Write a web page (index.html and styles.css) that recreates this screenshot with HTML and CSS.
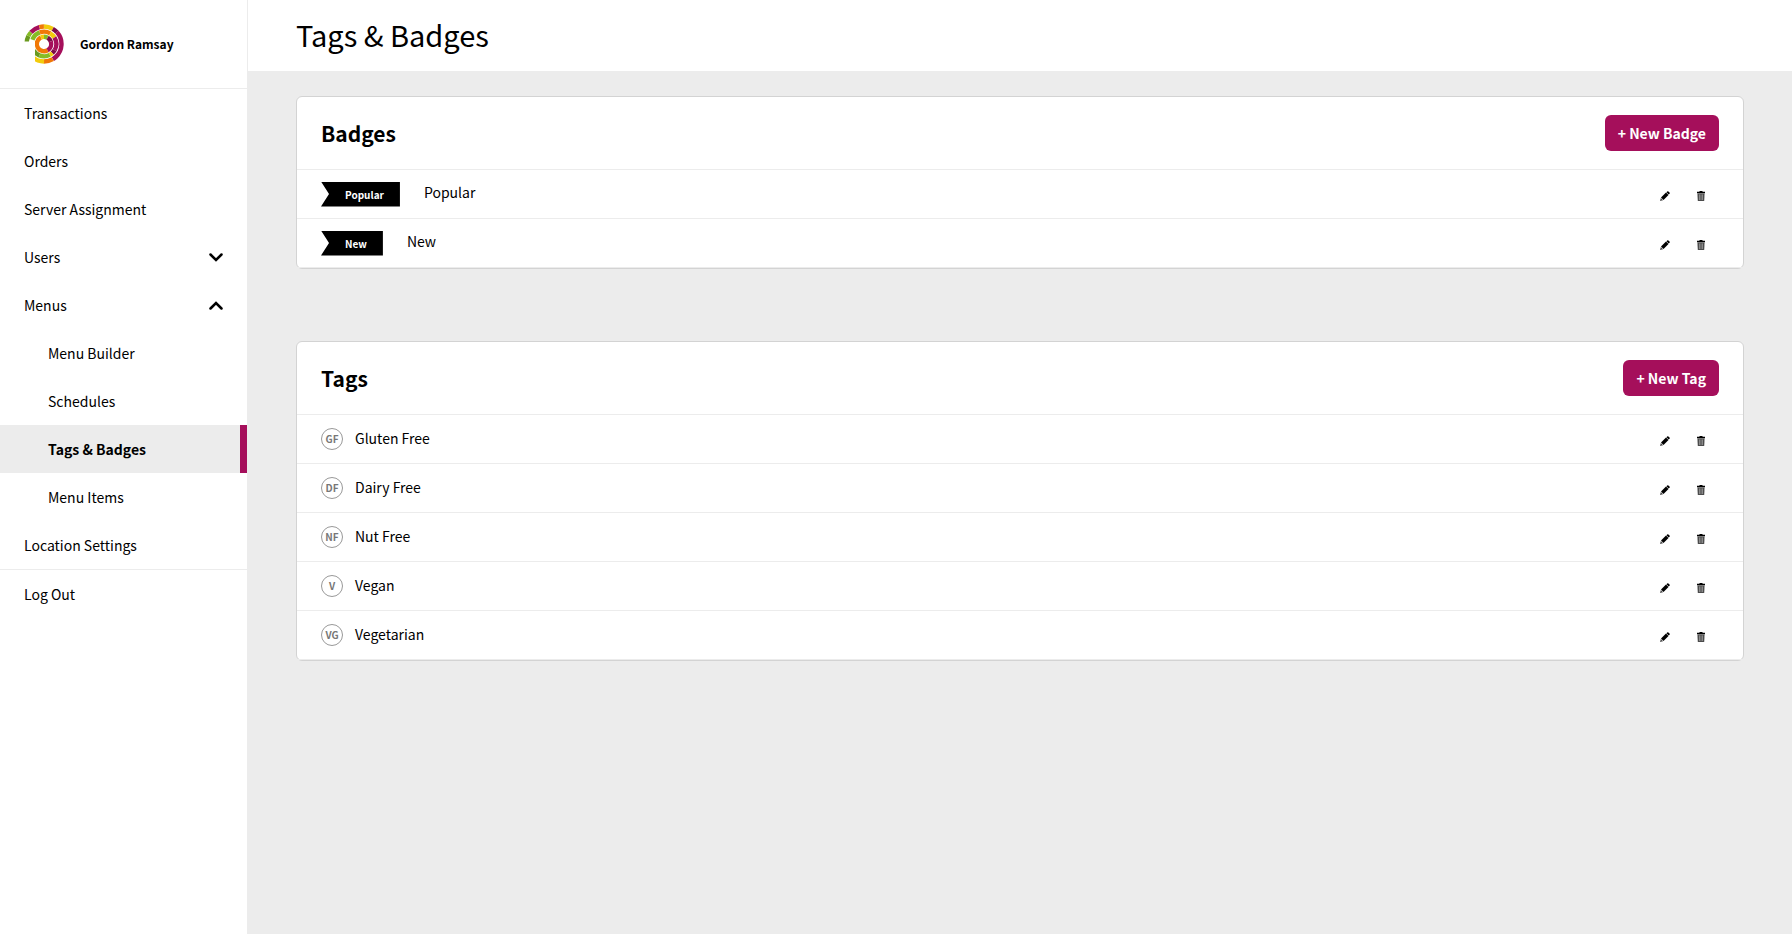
FILE: index.html
```html
<!DOCTYPE html>
<html lang="en">
<head>
    <meta charset="UTF-8">
    <meta name="viewport" content="width=device-width, initial-scale=1.0">
    <title>Tags &amp; Badges</title>
    <link rel="stylesheet" href="styles.css">
</head>
<body>
    <!-- Shared icons -->
    <svg class="sprite" aria-hidden="true">
        <symbol id="icon-pencil" viewBox="0 0 10 10">
            <path d="M7.2 0.5 Q7.8 -0.1 8.4 0.5 L9.5 1.6 Q10.1 2.2 9.5 2.8 L8.7 3.6 L6.4 1.3 Z"/>
            <path d="M6 1.5 L8.5 4 L3.5 9 L1 6.5 Z"/>
            <path d="M0.8 6.9 L3.1 9.2 L0 10 Z" opacity="0.7"/>
        </symbol>
        <symbol id="icon-trash" viewBox="0 0 8 10">
            <path d="M2.5 0 H5.5 V0.8 H8 V2.2 H0 V0.8 H2.5 Z"/>
            <path d="M0.4 2.6 H7.6 L7.2 10 H0.8 Z" opacity="0.7"/>
            <path d="M2.5 3.4 V9 M4 3.4 V9 M5.5 3.4 V9" stroke="#fff" stroke-width="0.5" opacity="0.7"/>
        </symbol>
        <symbol id="icon-chevron" viewBox="0 0 14 9">
            <path d="M1.5 1.5 L7 7 L12.5 1.5" fill="none" stroke="#000" stroke-width="2.5" stroke-linecap="round"/>
        </symbol>
    </svg>

    <div class="app">
        <aside class="sidebar">
            <div class="brand">
                <svg class="brand-logo" viewBox="0 0 40 40" fill="none" stroke-width="4.4" aria-hidden="true">
                    <clipPath id="logo-clip"><path d="M0 0 H40 V40 H11 V17.5 H0 Z"/></clipPath>
                    <g clip-path="url(#logo-clip)">
                        <!-- outer ring -->
                        <circle cx="20" cy="20" r="17.5" pathLength="360" stroke="#6a9a1f" stroke-dasharray="27 333" transform="rotate(180 20 20)"/>
                        <circle cx="20" cy="20" r="17.5" pathLength="360" stroke="#86bc25" stroke-dasharray="15 345" transform="rotate(207 20 20)"/>
                        <circle cx="20" cy="20" r="17.5" pathLength="360" stroke="#a50f5b" stroke-dasharray="33 327" transform="rotate(222 20 20)"/>
                        <circle cx="20" cy="20" r="17.5" pathLength="360" stroke="#f07807" stroke-dasharray="15 345" transform="rotate(255 20 20)"/>
                        <circle cx="20" cy="20" r="17.5" pathLength="360" stroke="#f2cb0c" stroke-dasharray="30 330" transform="rotate(270 20 20)"/>
                        <circle cx="20" cy="20" r="17.5" pathLength="360" stroke="#7d0c49" stroke-dasharray="18 342" transform="rotate(300 20 20)"/>
                        <circle cx="20" cy="20" r="17.5" pathLength="360" stroke="#a50f5b" stroke-dasharray="102 258" transform="rotate(318 20 20)"/>
                        <circle cx="20" cy="20" r="17.5" pathLength="360" stroke="#f07807" stroke-dasharray="30 330" transform="rotate(60 20 20)"/>
                        <circle cx="20" cy="20" r="17.5" pathLength="360" stroke="#f2cb0c" stroke-dasharray="40 320" transform="rotate(90 20 20)"/>
                        <!-- middle ring -->
                        <circle cx="20" cy="20" r="12.3" pathLength="360" stroke="#86bc25" stroke-dasharray="50 310" transform="rotate(200 20 20)"/>
                        <circle cx="20" cy="20" r="12.3" pathLength="360" stroke="#f07807" stroke-dasharray="50 310" transform="rotate(250 20 20)"/>
                        <circle cx="20" cy="20" r="12.3" pathLength="360" stroke="#f2cb0c" stroke-dasharray="28 332" transform="rotate(300 20 20)"/>
                        <circle cx="20" cy="20" r="12.3" pathLength="360" stroke="#a50f5b" stroke-dasharray="62 298" transform="rotate(328 20 20)"/>
                        <circle cx="20" cy="20" r="12.3" pathLength="360" stroke="#7d0c49" stroke-dasharray="18 342" transform="rotate(30 20 20)"/>
                        <circle cx="20" cy="20" r="12.3" pathLength="360" stroke="#f2cb0c" stroke-dasharray="14 346" transform="rotate(48 20 20)"/>
                        <circle cx="20" cy="20" r="12.3" pathLength="360" stroke="#86bc25" stroke-dasharray="50 310" transform="rotate(62 20 20)"/>
                        <circle cx="20" cy="20" r="12.3" pathLength="360" stroke="#6a9a1f" stroke-dasharray="36 324" transform="rotate(112 20 20)"/>
                        <!-- inner ring -->
                        <circle cx="20" cy="20" r="7.2" pathLength="360" stroke="#f07807" stroke-dasharray="185 175" transform="rotate(60 20 20)"/>
                        <circle cx="20" cy="20" r="7.2" pathLength="360" stroke="#f2cb0c" stroke-dasharray="25 335" transform="rotate(245 20 20)"/>
                        <circle cx="20" cy="20" r="7.2" pathLength="360" stroke="#86bc25" stroke-dasharray="30 330" transform="rotate(270 20 20)"/>
                        <circle cx="20" cy="20" r="7.2" pathLength="360" stroke="#7d0c49" stroke-dasharray="40 320" transform="rotate(300 20 20)"/>
                        <circle cx="20" cy="20" r="7.2" pathLength="360" stroke="#a50f5b" stroke-dasharray="80 280" transform="rotate(340 20 20)"/>
                    </g>
                </svg>
                <span class="brand-name">Gordon Ramsay</span>
            </div>

            <nav class="nav">
                <a class="nav-item" href="#">Transactions</a>
                <a class="nav-item" href="#">Orders</a>
                <a class="nav-item" href="#">Server Assignment</a>
                <button class="nav-item" type="button" aria-expanded="false">Users <svg class="chevron"><use href="#icon-chevron"/></svg></button>
                <button class="nav-item" type="button" aria-expanded="true">Menus <svg class="chevron up"><use href="#icon-chevron"/></svg></button>
                <a class="nav-item sub" href="#">Menu Builder</a>
                <a class="nav-item sub" href="#">Schedules</a>
                <a class="nav-item sub active" href="#" aria-current="page">Tags &amp; Badges</a>
                <a class="nav-item sub" href="#">Menu Items</a>
                <a class="nav-item" href="#">Location Settings</a>
                <a class="nav-item logout" href="#">Log Out</a>
            </nav>
        </aside>

        <main class="main">
            <header class="page-header">
                <h1>Tags &amp; Badges</h1>
            </header>

            <div class="content">
                <section class="card">
                    <div class="card-header">
                        <h2>Badges</h2>
                        <button class="btn" type="button">+ New Badge</button>
                    </div>
                    <ul class="list">
                        <li class="row">
                            <span class="badge">Popular</span>
                            <span class="badge-name">Popular</span>
                            <span class="actions">
                                <button class="icon-btn" type="button" aria-label="Edit"><svg class="pencil"><use href="#icon-pencil"/></svg></button>
                                <button class="icon-btn" type="button" aria-label="Delete"><svg class="trash"><use href="#icon-trash"/></svg></button>
                            </span>
                        </li>
                        <li class="row">
                            <span class="badge">New</span>
                            <span class="badge-name">New</span>
                            <span class="actions">
                                <button class="icon-btn" type="button" aria-label="Edit"><svg class="pencil"><use href="#icon-pencil"/></svg></button>
                                <button class="icon-btn" type="button" aria-label="Delete"><svg class="trash"><use href="#icon-trash"/></svg></button>
                            </span>
                        </li>
                    </ul>
                </section>

                <section class="card">
                    <div class="card-header">
                        <h2>Tags</h2>
                        <button class="btn" type="button">+ New Tag</button>
                    </div>
                    <ul class="list">
                        <li class="row">
                            <span class="tag">GF</span>
                            <span class="tag-name">Gluten Free</span>
                            <span class="actions">
                                <button class="icon-btn" type="button" aria-label="Edit"><svg class="pencil"><use href="#icon-pencil"/></svg></button>
                                <button class="icon-btn" type="button" aria-label="Delete"><svg class="trash"><use href="#icon-trash"/></svg></button>
                            </span>
                        </li>
                        <li class="row">
                            <span class="tag">DF</span>
                            <span class="tag-name">Dairy Free</span>
                            <span class="actions">
                                <button class="icon-btn" type="button" aria-label="Edit"><svg class="pencil"><use href="#icon-pencil"/></svg></button>
                                <button class="icon-btn" type="button" aria-label="Delete"><svg class="trash"><use href="#icon-trash"/></svg></button>
                            </span>
                        </li>
                        <li class="row">
                            <span class="tag">NF</span>
                            <span class="tag-name">Nut Free</span>
                            <span class="actions">
                                <button class="icon-btn" type="button" aria-label="Edit"><svg class="pencil"><use href="#icon-pencil"/></svg></button>
                                <button class="icon-btn" type="button" aria-label="Delete"><svg class="trash"><use href="#icon-trash"/></svg></button>
                            </span>
                        </li>
                        <li class="row">
                            <span class="tag">V</span>
                            <span class="tag-name">Vegan</span>
                            <span class="actions">
                                <button class="icon-btn" type="button" aria-label="Edit"><svg class="pencil"><use href="#icon-pencil"/></svg></button>
                                <button class="icon-btn" type="button" aria-label="Delete"><svg class="trash"><use href="#icon-trash"/></svg></button>
                            </span>
                        </li>
                        <li class="row">
                            <span class="tag">VG</span>
                            <span class="tag-name">Vegetarian</span>
                            <span class="actions">
                                <button class="icon-btn" type="button" aria-label="Edit"><svg class="pencil"><use href="#icon-pencil"/></svg></button>
                                <button class="icon-btn" type="button" aria-label="Delete"><svg class="trash"><use href="#icon-trash"/></svg></button>
                            </span>
                        </li>
                    </ul>
                </section>
            </div>
        </main>
    </div>
</body>
</html>
```

FILE: styles.css
```css
* {
    margin: 0;
    padding: 0;
    box-sizing: border-box;
}

body {
    font-family: 'Source Sans Pro', 'Noto Sans CJK SC', sans-serif;
    font-size: 14px;
    line-height: 24px;
    color: #000;
    background: #ececec;
}

button {
    font: inherit;
    color: inherit;
    background: none;
    border: none;
    cursor: pointer;
}

.sprite {
    display: none;
}

.app {
    display: flex;
    min-height: 100vh;
}

/* Sidebar */
.sidebar {
    flex: 0 0 248px;
    background: #fff;
    border-right: 1px solid #ececec;
}

.brand {
    display: flex;
    align-items: center;
    gap: 16px;
    padding: 24px;
    border-bottom: 1px solid #ececec;
}

.brand-logo {
    width: 40px;
    height: 40px;
}

.brand-name {
    font-size: 12px;
    font-weight: 700;
}

.nav-item {
    display: flex;
    align-items: center;
    justify-content: space-between;
    width: 100%;
    height: 48px;
    padding: 0 24px;
    color: #000;
    text-decoration: none;
}

.nav-item.sub {
    padding-left: 48px;
}

.nav-item.active {
    font-weight: 700;
    background: #ececec;
    border-right: 7px solid #a50f5b;
}

.nav-item.logout {
    height: 49px;
    border-top: 1px solid #ececec;
}

.chevron {
    width: 14px;
    height: 9px;
}

.chevron.up {
    transform: rotate(180deg);
}

/* Page */
.main {
    flex: 1;
    min-width: 0;
}

.page-header {
    padding: 14px 48px 17px;
    background: #fff;
}

h1 {
    font-size: 29px;
    font-weight: 400;
    line-height: 40px;
}

.content {
    display: flex;
    flex-direction: column;
    gap: 72px;
    padding: 25px 48px;
}

.card {
    background: #fff;
    border: 1px solid #d3d3d3;
    border-radius: 6px;
}

.card-header {
    display: flex;
    align-items: center;
    justify-content: space-between;
    padding: 18px 24px;
}

h2 {
    font-size: 21px;
    font-weight: 700;
}

.btn {
    padding: 6px 13px;
    color: #fff;
    font-weight: 700;
    background: #a50f5b;
    border-radius: 6px;
}

.list {
    list-style: none;
    border-bottom: 1px solid #ececec;
}

.row {
    display: flex;
    align-items: center;
    height: 49px;
    padding: 0 24px;
    border-top: 1px solid #ececec;
}

.badge {
    padding: 0 16px 0 24px;
    color: #fff;
    font-size: 10px;
    font-weight: 700;
    line-height: 25px;
    background: #000;
    clip-path: polygon(0 0, 100% 0, 100% 100%, 0 100%, 8px 50%);
}

.badge-name {
    margin-left: 24px;
    padding-bottom: 4px;
}

.tag {
    width: 22px;
    height: 22px;
    color: #777;
    font-size: 10px;
    font-weight: 700;
    line-height: 20px;
    text-align: center;
    border: 1px solid #999;
    border-radius: 50%;
}

.tag-name {
    margin-left: 12px;
    padding-bottom: 2px;
}

.actions {
    display: flex;
    margin-left: auto;
    padding-top: 4px;
}

.icon-btn {
    display: flex;
    align-items: center;
    justify-content: center;
    width: 36px;
    height: 24px;
}

.pencil {
    width: 10px;
    height: 10px;
}

.trash {
    width: 8px;
    height: 10px;
}
```
